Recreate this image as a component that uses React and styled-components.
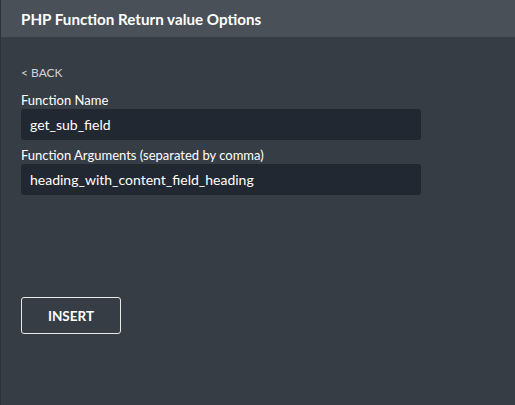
import React from 'react';
import styled, { createGlobalStyle } from 'styled-components';

const Global = createGlobalStyle`
  html, body {
    margin: 0;
    padding: 0;
    background: #363d45;
  }
  body {
    font-family: Lato, "Open Sans", sans-serif;
  }
`

const Panel = styled.div`
  width: 515px;
  height: 405px;
  background: #363d45;
  border-left: 1px solid #2c3238;
  box-sizing: border-box;
  display: flex;
  flex-direction: column;
`

const Header = styled.div`
  height: 37px;
  background: #495057;
  display: flex;
  align-items: center;
  padding: 0 20px;
  color: #fff;
  font-size: 15.2px;
  font-weight: 700;
`

const Body = styled.div`
  padding: 28px 20px 0 20px;
  display: flex;
  flex-direction: column;
`

const Back = styled.a`
  color: #d0d4d8;
  font-size: 12px;
  text-decoration: none;
  margin-bottom: 12px;
  cursor: pointer;
`

const Label = styled.label`
  color: #fff;
  font-size: 13px;
  margin-bottom: 1px;
`

const Input = styled.input`
  width: 400px;
  height: 31px;
  box-sizing: border-box;
  background: #222831;
  border: none;
  border-radius: 3px;
  color: #fff;
  font-family: Lato, "Open Sans", sans-serif;
  font-size: 14px;
  padding: 0 9px;
  margin-bottom: 7px;
  outline: none;
`

const Button = styled.button`
  margin-top: 95px;
  width: 100px;
  height: 37px;
  background: transparent;
  border: 1px solid #e6e8ea;
  border-radius: 3px;
  color: #fff;
  font-family: Lato, "Open Sans", sans-serif;
  font-weight: 700;
  font-size: 13.5px;
  cursor: pointer;
`

export default function App() {
  return (
    <>
      <Global />
      <Panel>
        <Header>PHP Function Return value Options</Header>
        <Body>
          <Back>&lt; BACK</Back>
          <Label>Function Name</Label>
          <Input defaultValue="get_sub_field" />
          <Label>Function Arguments (separated by comma)</Label>
          <Input defaultValue="heading_with_content_field_heading" />
          <Button>INSERT</Button>
        </Body>
      </Panel>
    </>
  )
}
